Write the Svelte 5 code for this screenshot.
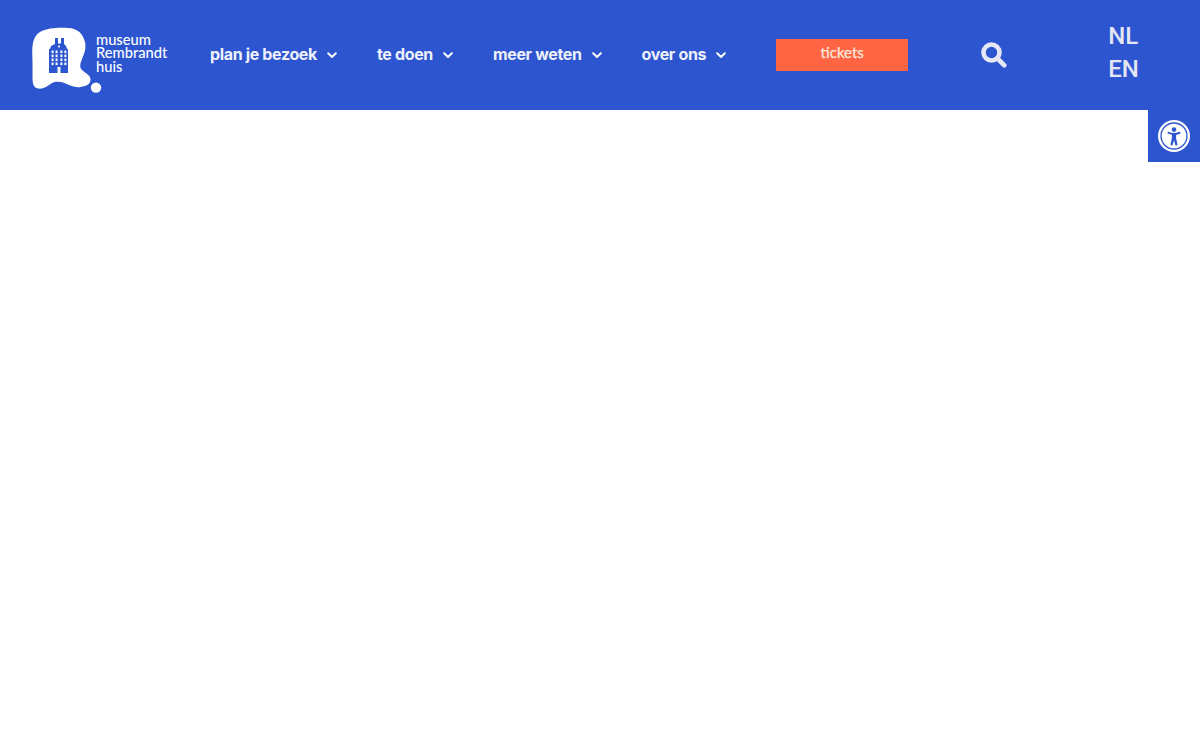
<script>
  const navItems = ['plan je bezoek', 'te doen', 'meer weten', 'over ons'];
  // window grid of the little canal house in the logo
  const windowCols = [19.6, 23.6, 28.4, 32.4];
  const windowRows = [23.5, 27.5, 31.5, 35.5];
</script>

<header class="site-header">
  <a class="logo" href="#home" aria-label="museum Rembrandthuis">
    <svg class="mark" viewBox="0 0 70 67" width="70" height="67" aria-hidden="true">
      <path fill="#fff" d="M.3 28C0 18 1 9 8 5 15 1 25 .5 33 .8 42 1 50 3 53 15c1.500 7-1 12-3 17-1.500 4-3 8 0 11 4 4 9 5 8.500 10-.5 5-5 6-10 7-6 1-11-2-16-4-5-1.500-10-2-14 1-4 3-9 6-14 4-3-1-4-5-4-10C.6 44 .6 36 .3 28z"/>
      <circle fill="#fff" cx="64" cy="60.600" r="5.200"/>
      <path fill="#2d55cf" d="M23 11h3v5.500h3V11h3v6l2 2 .8 2.500 1.200.8V46H28.500v-6h-3v6H17V22.300l1.200-.8.8-2.500 4-2z"/>
      <g fill="#fff">
        {#each windowRows as y}
          {#each windowCols as x}
            <rect {x} {y} width="2" height="2.600" />
          {/each}
        {/each}
        <circle cx="27" cy="19.500" r="1.100"/>
      </g>
    </svg>
    <span class="wordmark">museum<br />Rembrandt<br />huis</span>
  </a>

  <nav class="main-nav">
    {#each navItems as item}
      <a class="nav-link" href="#menu">
        {item}
        <svg class="chevron" viewBox="0 0 10 7" width="10" height="7" aria-hidden="true">
          <path d="M1.200 1.300 5 5l3.800-3.700" fill="none" stroke="#fff" stroke-width="2" stroke-linecap="round" stroke-linejoin="round" />
        </svg>
      </a>
    {/each}
  </nav>

  <a class="tickets" href="#tickets">tickets</a>

  <button class="search" aria-label="zoeken">
    <svg viewBox="0 0 26 26" width="26" height="26" aria-hidden="true">
      <circle cx="10.500" cy="10.500" r="8" fill="none" stroke="#e6e9f5" stroke-width="4.600" />
      <path d="M16.500 16.500 23.300 23.300" stroke="#e6e9f5" stroke-width="4.600" stroke-linecap="round" />
    </svg>
  </button>

  <ul class="langs">
    <li><a href="#nl">NL</a></li>
    <li><a href="#en">EN</a></li>
  </ul>
</header>

<button class="a11y" aria-label="toegankelijkheid">
  <svg viewBox="0 0 32 32" width="32" height="32" aria-hidden="true">
    <circle cx="16" cy="16" r="16" fill="#fff" />
    <circle cx="16" cy="16" r="13" fill="none" stroke="#2d55cf" stroke-width="1.300" />
    <circle cx="16" cy="9.600" r="2.300" fill="#2d55cf" />
    <path fill="#2d55cf" d="M9.600 12.200c-.3.700.2 1.300.9 1.500l3.400 1.100v3.300l-1.300 5.800c-.2.800.2 1.400.9 1.500.5.100 1-.2 1.200-.7L16 20.200l1.300 4.700c.2.500.7.800 1.200.7.700-.1 1.100-.7.900-1.500l-1.300-5.800v-3.300l3.400-1.100c.7-.2 1.200-.8.900-1.500-.2-.5-.8-.7-1.300-.5-1.700.6-3.300 1-5.100 1s-3.400-.4-5.100-1c-.5-.2-1.100 0-1.300.5z" />
  </svg>
</button>

<style>
  :global(body) {
    background: #fff;
  }

  .site-header {
    display: flex;
    align-items: center;
    height: 110px;
    padding-left: 32px;
    background: #2d55cf;
    box-sizing: border-box;
  }

  .logo {
    display: flex;
    align-items: flex-start;
    width: 137px;
    flex: none;
    padding-top: 10px;
    color: #fff;
    text-decoration: none;
  }

  .mark {
    flex: none;
    margin-right: -6px;
  }

  .wordmark {
    font: 500 14.700px/13.800px Lato, sans-serif;
    padding-top: 6px;
  }

  .main-nav {
    display: flex;
    gap: 40px;
    margin-left: 41px;
    margin-bottom: 2px;
  }

  .nav-link {
    display: flex;
    align-items: center;
    gap: 10px;
    font: 700 16px/20px Inter, sans-serif;
    letter-spacing: -0.35px;
    color: #eef1fb;
    text-decoration: none;
    white-space: nowrap;
  }

  .chevron {
    margin-top: 2px;
  }

  .tickets {
    width: 132px;
    height: 32px;
    margin-left: 50px;
    background: #ff6543;
    color: #fbe9df;
    font: 400 15px/27px Lato, sans-serif;
    -webkit-text-stroke: 0.25px #fbe9df;
    text-align: center;
    text-decoration: none;
  }

  .search {
    display: flex;
    margin-left: 73px;
    padding: 0;
    border: 0;
    background: none;
  }

  .langs {
    list-style: none;
    margin: -5px 0 0 101px;
    padding: 0;
    font: 500 24px/33px Roboto, sans-serif;
  }

  .langs a {
    color: #e4e6f4;
    text-decoration: none;
  }

  .a11y {
    position: absolute;
    top: 110px;
    right: 0;
    display: flex;
    align-items: center;
    justify-content: center;
    width: 52px;
    height: 52px;
    padding: 0;
    border: 0;
    background: #2d55cf;
  }
</style>
